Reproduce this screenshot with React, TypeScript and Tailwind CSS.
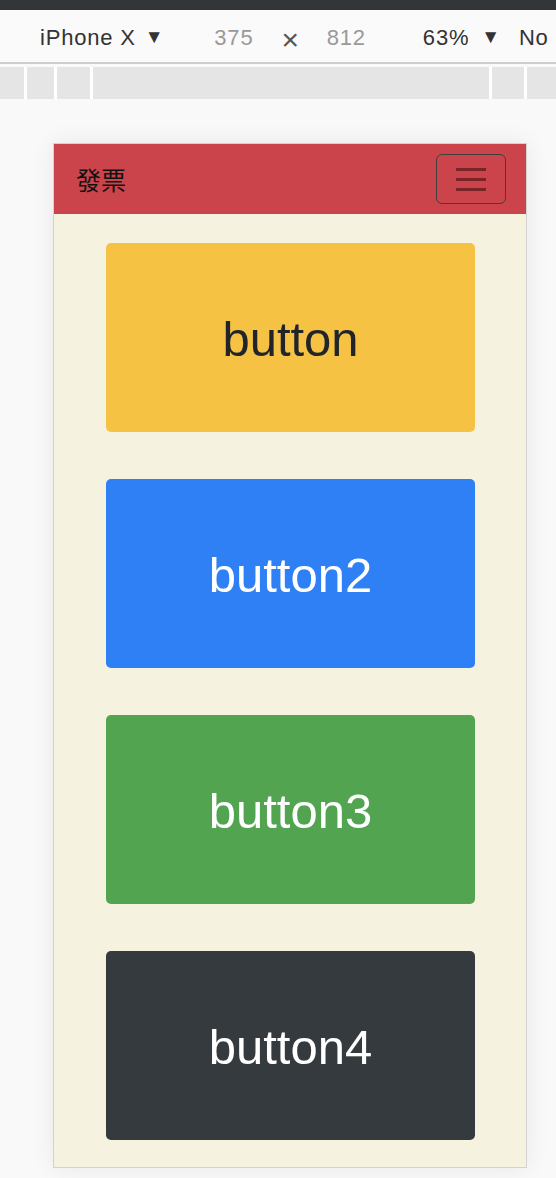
import React from "react";

const btns = [
  { label: "button", cls: "bg-[#f5c244] text-[#212529]" },
  { label: "button2", cls: "bg-[#2f80f5] text-white" },
  { label: "button3", cls: "bg-[#53a451] text-white" },
  { label: "button4", cls: "bg-[#353a3e] text-white" },
];

export default function App() {
  return (
    <div className="w-[556px] h-[1178px] bg-[#f8f8f8] overflow-hidden flex flex-col" style={{ fontFamily: '"Liberation Sans", Arial, sans-serif' }}>
      <div className="h-[10px] bg-[#323639] shrink-0" />
      <div className="h-[52px] bg-[#fafafa] shrink-0 flex items-center text-[22px] tracking-[0.8px] text-[#333] whitespace-nowrap pt-[2px]">
        <span className="ml-[40px]">iPhone X</span>
        <span className="ml-[9px] text-[19px]">▼</span>
        <span className="ml-[50px] text-[#999]">375</span>
        <span className="ml-[28px] text-[#555] text-[30px] mt-[6px] leading-none">×</span>
        <span className="ml-[27px] text-[#999]">812</span>
        <span className="ml-[57px]">63%</span>
        <span className="ml-[12px] text-[19px]">▼</span>
        <span className="ml-[18px]">No</span>
      </div>
      <div className="h-[2px] bg-[#cdcdcd] shrink-0" />
      <div className="h-[3px] bg-[#fafafa] shrink-0" />
      <div className="h-[32px] shrink-0 flex gap-[3px] bg-white">
        <div className="w-[24px] bg-[#e5e5e5]" />
        <div className="w-[27px] bg-[#e5e5e5]" />
        <div className="w-[33px] bg-[#e5e5e5]" />
        <div className="w-[396px] bg-[#e5e5e5]" />
        <div className="w-[32px] bg-[#e5e5e5]" />
        <div className="flex-1 bg-[#e5e5e5]" />
      </div>
      <div className="flex-1 bg-[#f9f9f9] pt-[44px]">
        <div className="ml-[53px] w-[474px] h-[1025px] border border-[#d2d2d2] bg-[#f5f3e0] shadow-[0_0_24px_rgba(0,0,0,0.07)] flex flex-col">
          <div className="h-[70px] bg-[#cb444b] flex items-center justify-between pl-[22px] pr-[20px] shrink-0">
            <span className="text-[25px] text-[#111] leading-none" style={{ fontFamily: '"Noto Sans CJK TC", "Noto Sans CJK SC", sans-serif' }}>發票</span>
            <div className="w-[70px] h-[50px] border-[1.5px] border-[#3f3f3f] rounded-[6px] flex flex-col items-center justify-center gap-[7px]">
              <div className="w-[30px] h-[3px] bg-[#7a2429]" />
              <div className="w-[30px] h-[3px] bg-[#7a2429]" />
              <div className="w-[30px] h-[3px] bg-[#7a2429]" />
            </div>
          </div>
          <div className="flex flex-col gap-[47px] pt-[29px] pl-[52px] pr-[51px]">
            {btns.map((b) => (
              <div key={b.label} className={`h-[189px] rounded-[5px] flex items-center justify-center text-[49px] pt-[4px] ${b.cls}`}>
                {b.label}
              </div>
            ))}
          </div>
        </div>
      </div>
    </div>
  );
}
